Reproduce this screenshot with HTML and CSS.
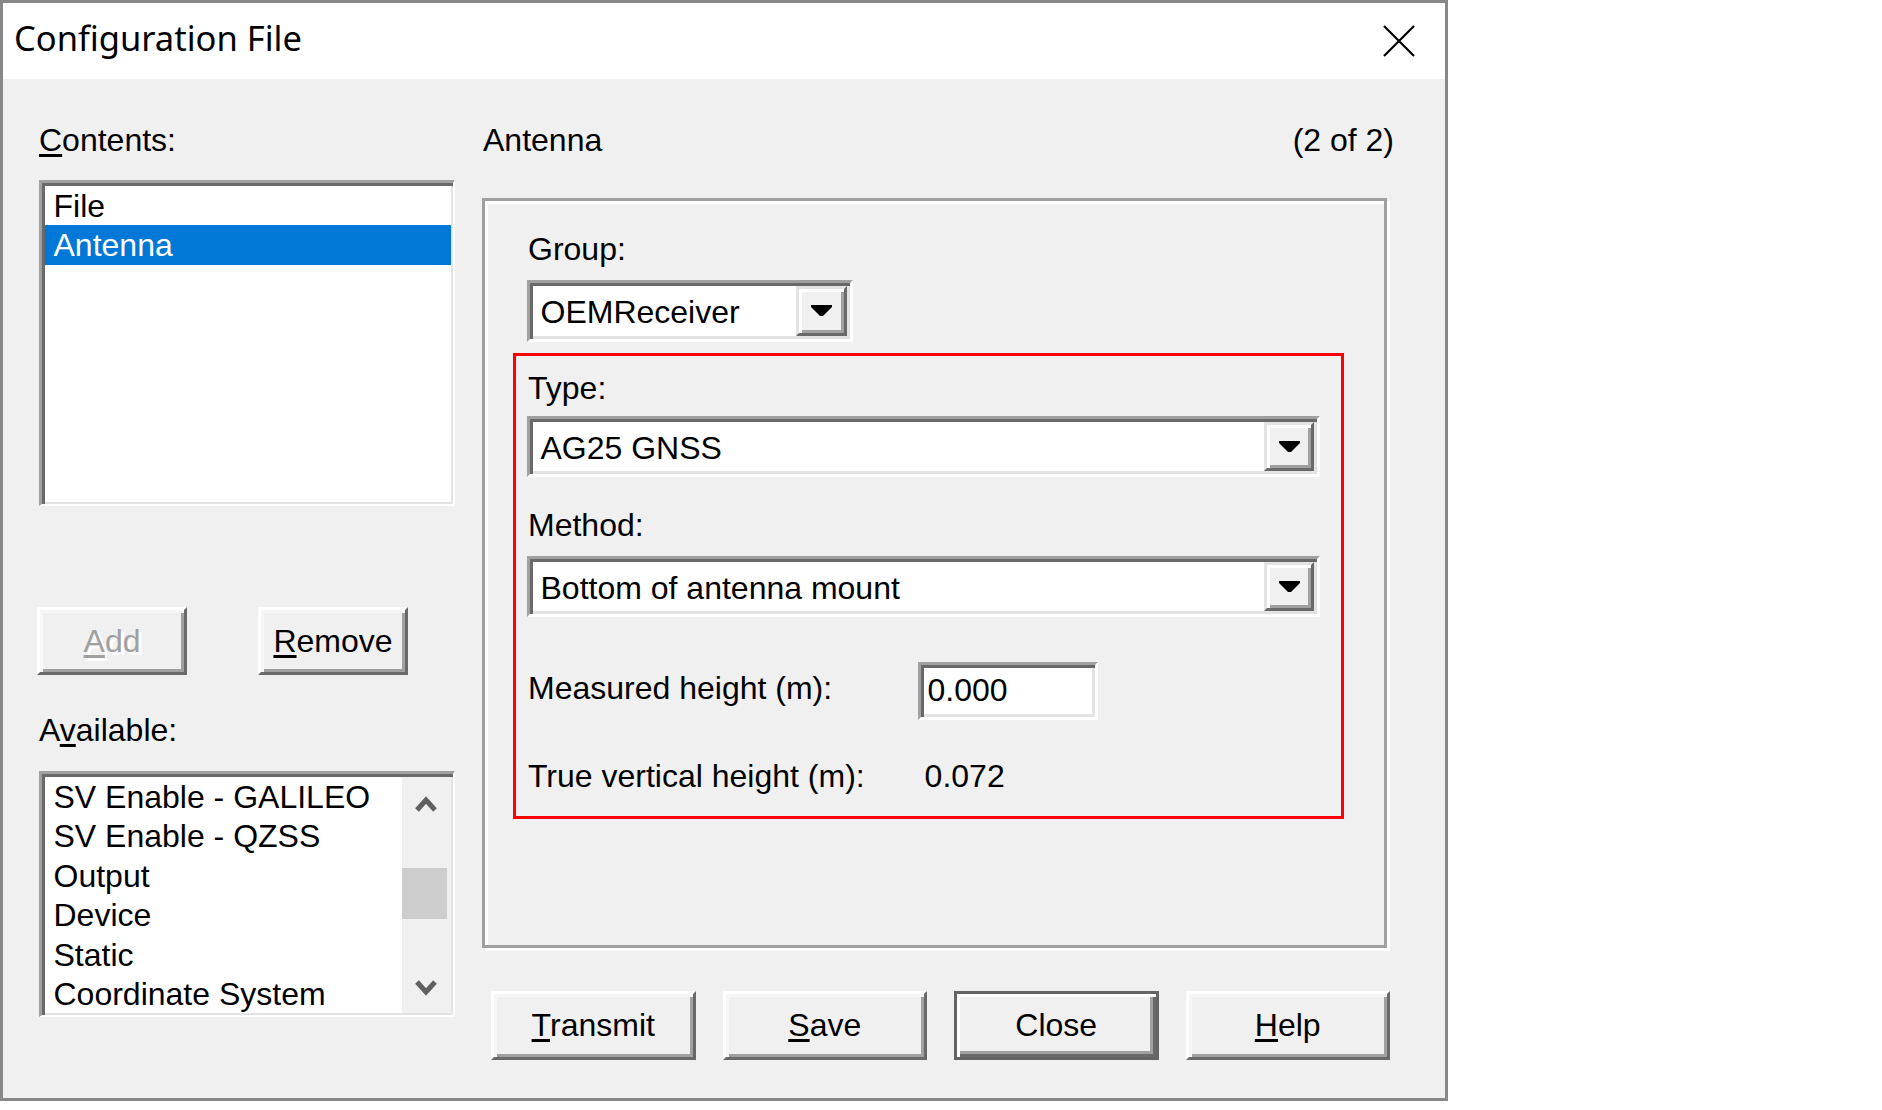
FILE: index.html
```html
<!DOCTYPE html>
<html lang="en">
<head>
<meta charset="utf-8">
<title>Configuration File</title>
<link rel="stylesheet" href="styles.css">
</head>
<body>
<div class="window">
  <div class="titlebar">
    <span class="title">Configuration File</span>
    <span class="close-x">
      <svg width="32" height="32" viewBox="0 0 32 32"><path d="M1 1 L31 31 M31 1 L1 31" stroke="#000" stroke-width="2.2" fill="none"/></svg>
    </span>
  </div>

  <div class="client">
    <div class="left-col">
      <div class="label"><u>C</u>ontents:</div>
      <div class="sunken listbox contents">
        <div class="item">File</div>
        <div class="item selected">Antenna</div>
      </div>

      <div class="btn-pair">
        <div class="btn disabled"><span><u>A</u>dd</span></div>
        <div class="btn"><span><u>R</u>emove</span></div>
      </div>

      <div class="label avail-label">A<u>v</u>ailable:</div>
      <div class="sunken listbox available">
        <div class="items">
          <div class="item">SV Enable - GALILEO</div>
          <div class="item">SV Enable - QZSS</div>
          <div class="item">Output</div>
          <div class="item">Device</div>
          <div class="item">Static</div>
          <div class="item">Coordinate System</div>
        </div>
        <div class="scrollbar">
          <div class="arrow up">
            <svg width="22" height="16" viewBox="0 0 22 16"><polyline points="2,14 11,4 20,14" fill="none" stroke="#606060" stroke-width="5"/></svg>
          </div>
          <div class="track"><div class="thumb"></div></div>
          <div class="arrow down">
            <svg width="22" height="16" viewBox="0 0 22 16"><polyline points="2,2 11,12 20,2" fill="none" stroke="#606060" stroke-width="5"/></svg>
          </div>
        </div>
      </div>
    </div>

    <div class="right-col">
      <div class="heading">
        <span>Antenna</span>
        <span>(2 of 2)</span>
      </div>

      <div class="groupbox">
        <div class="field-label indent">Group:</div>
        <div class="sunken combo group-combo indent">
          <span class="value">OEMReceiver</span>
          <span class="drop"><svg width="21" height="11" viewBox="0 0 21 11"><polygon points="0,0 21,0 21,2 12,11 9,11 0,2" fill="#000"/></svg></span>
        </div>

        <div class="redbox">
          <div class="field-label">Type:</div>
          <div class="sunken combo wide type-combo">
            <span class="value">AG25 GNSS</span>
            <span class="drop"><svg width="21" height="11" viewBox="0 0 21 11"><polygon points="0,0 21,0 21,2 12,11 9,11 0,2" fill="#000"/></svg></span>
          </div>

          <div class="field-label method-label">Method:</div>
          <div class="sunken combo wide method-combo">
            <span class="value">Bottom of antenna mount</span>
            <span class="drop"><svg width="21" height="11" viewBox="0 0 21 11"><polygon points="0,0 21,0 21,2 12,11 9,11 0,2" fill="#000"/></svg></span>
          </div>

          <div class="measure-row">
            <div class="row-label">Measured height (m):</div>
            <div class="sunken edit"><span>0.000</span></div>
          </div>

          <div class="true-row">
            <div class="row-label">True vertical height (m):</div>
            <div class="readout">0.072</div>
          </div>
        </div>
      </div>

      <div class="actions">
        <div class="btn"><span><u>T</u>ransmit</span></div>
        <div class="btn"><span><u>S</u>ave</span></div>
        <div class="btn default"><span>Close</span></div>
        <div class="btn"><span><u>H</u>elp</span></div>
      </div>
    </div>
  </div>
</div>
</body>
</html>
```

FILE: styles.css
```css
* {
  box-sizing: border-box;
}

body {
  margin: 0;
  background: #ffffff;
  font-family: "Liberation Sans", Arial, sans-serif;
  font-size: 32px;
  line-height: 37px;
  color: #000000;
}

u {
  text-decoration-thickness: 3px;
  text-underline-offset: 3px;
}

/* ---------- window frame ---------- */
.window {
  width: 1448px;
  height: 1101px;
  border: 3px solid #888888;
  display: flex;
  flex-direction: column;
}

.titlebar {
  height: 76px;
  flex: none;
  background: #ffffff;
  display: flex;
  align-items: center;
  padding-left: 11px;
}

.title {
  flex: 1;
  font-family: "Noto Sans", "Liberation Sans", sans-serif;
  font-size: 34.5px;
  line-height: 34px;
  padding-bottom: 6px;
}

.close-x {
  width: 92px;
  display: flex;
  justify-content: center;
  align-items: center;
}

.close-x svg {
  display: block;
}

.client {
  flex: 1;
  background: #f0f0f0;
  display: grid;
  grid-template-columns: 418px 908px;
  column-gap: 27px;
  align-items: start;
  padding: 43px 0 0 34px;
}

/* ---------- shared control looks ---------- */
.sunken {
  background: #ffffff;
  border-style: solid;
  border-width: 3px 2px 2px 3px;
  border-color: #a0a0a0 #ffffff #ffffff #a0a0a0;
  box-shadow: inset 3px 3px 0 #696969, inset -2px -2px 0 #e3e3e3;
  padding: 3px 2px 2px 3px;
}

.btn {
  background: #f0f0f0;
  border: 3px solid;
  border-color: #ffffff #696969 #696969 #ffffff;
  box-shadow: inset 3px 3px 0 #f7f7f7, inset -3px -3px 0 #a0a0a0;
  display: flex;
  align-items: center;
  justify-content: center;
}

.btn.disabled {
  color: #a0a0a0;
  text-shadow: 3px 3px 0 #ffffff;
}

.btn.default {
  border-color: #646464;
  box-shadow: inset 3px 3px 0 #ffffff, inset -3px -3px 0 #696969, inset -6px -6px 0 #a0a0a0;
}

.label {
  margin-left: 2px;
}

/* ---------- left column ---------- */
.listbox .item {
  height: 39.4px;
  line-height: 39.4px;
  padding: 1px 0 0 8.5px;
  white-space: nowrap;
}

.listbox .item.selected {
  background: #0078d7;
  color: #ffffff;
}

.contents {
  margin: 21px 0 0 2px;
  width: 416px;
  height: 326px;
}

.btn-pair {
  margin-top: 101px;
  display: flex;
  gap: 71px;
}

.btn-pair .btn {
  width: 150px;
  height: 68px;
}

.avail-label {
  margin-top: 37.4px;
}

.available {
  margin: 21.6px 0 0 2px;
  width: 416px;
  height: 246px;
  display: flex;
  overflow: hidden;
}

.available .items {
  flex: 1;
}

.scrollbar {
  width: 49.5px;
  background: #f0f0f0;
  display: flex;
  flex-direction: column;
}

.scrollbar .arrow {
  height: 50px;
  display: flex;
  justify-content: center;
  align-items: center;
}

.scrollbar .arrow.up {
  padding-top: 4px;
}

.scrollbar .arrow svg {
  display: block;
}

.scrollbar .track {
  flex: 1;
}

.scrollbar .thumb {
  margin-top: 41px;
  width: 45px;
  height: 51px;
  background: #cdcdcd;
}

/* ---------- right column ---------- */
.heading {
  display: flex;
  justify-content: space-between;
  margin-left: 1px;
  margin-right: -4px;
}

.groupbox {
  margin-top: 39px;
  width: 905px;
  height: 750px;
  border: 3px solid #a0a0a0;
  box-shadow: inset 3px 3px 0 #ffffff, 3px 3px 0 #ffffff;
  padding: 30.4px 0 0 28px;
}

.indent {
  margin-left: 14px;
}

.field-label {
  padding-left: 1px;
}

.combo {
  display: flex;
  align-items: stretch;
  border-width: 3px;
  border-color: #a0a0a0 #ffffff #ffffff #a0a0a0;
  padding: 3px;
  box-shadow: inset 3px 3px 0 #696969, inset -3px -3px 0 #e3e3e3;
}

.combo .value {
  flex: 1;
  display: flex;
  align-items: center;
  padding: 4px 0 0 7.5px;
  white-space: nowrap;
}

.combo .drop {
  width: 50px;
  flex: none;
  display: flex;
  align-items: center;
  justify-content: center;
  background: #f0f0f0;
  border: 3px solid;
  border-color: #e3e3e3 #696969 #696969 #e3e3e3;
  box-shadow: inset 3px 3px 0 #ffffff, inset -3px -3px 0 #a0a0a0;
}

.combo .drop svg {
  display: block;
}

.group-combo {
  margin-top: 11.6px;
  width: 326px;
  height: 62px;
}

.group-combo .drop {
  width: 51px;
}

.redbox {
  margin-top: 11px;
  width: 831px;
  height: 466px;
  border: 3px solid #ff0000;
  padding: 14.4px 0 0 11px;
}

.combo.wide {
  width: 793px;
  height: 61px;
}

.type-combo {
  margin-top: 8.6px;
}

.method-label {
  margin-top: 30.4px;
}

.method-combo {
  margin-top: 11.6px;
}

.row-label {
  width: 391px;
  flex: none;
  padding-left: 1px;
  white-space: nowrap;
}

.measure-row {
  margin-top: 45px;
  display: flex;
  align-items: flex-start;
  height: 58px;
}

.measure-row .row-label {
  margin-top: 8.4px;
}

.edit {
  width: 180px;
  height: 58px;
  border-width: 3px;
  padding: 3px;
  box-shadow: inset 3px 3px 0 #696969, inset -3px -3px 0 #e3e3e3;
  display: flex;
  align-items: center;
}

.edit span {
  padding-left: 3.5px;
}

.true-row {
  margin-top: 38.4px;
  display: flex;
}

.readout {
  padding-left: 6.6px;
}

.actions {
  margin-top: 43px;
  padding-left: 9px;
  display: flex;
  gap: 27px;
}

.actions .btn {
  width: 204.5px;
  height: 69px;
}
```
